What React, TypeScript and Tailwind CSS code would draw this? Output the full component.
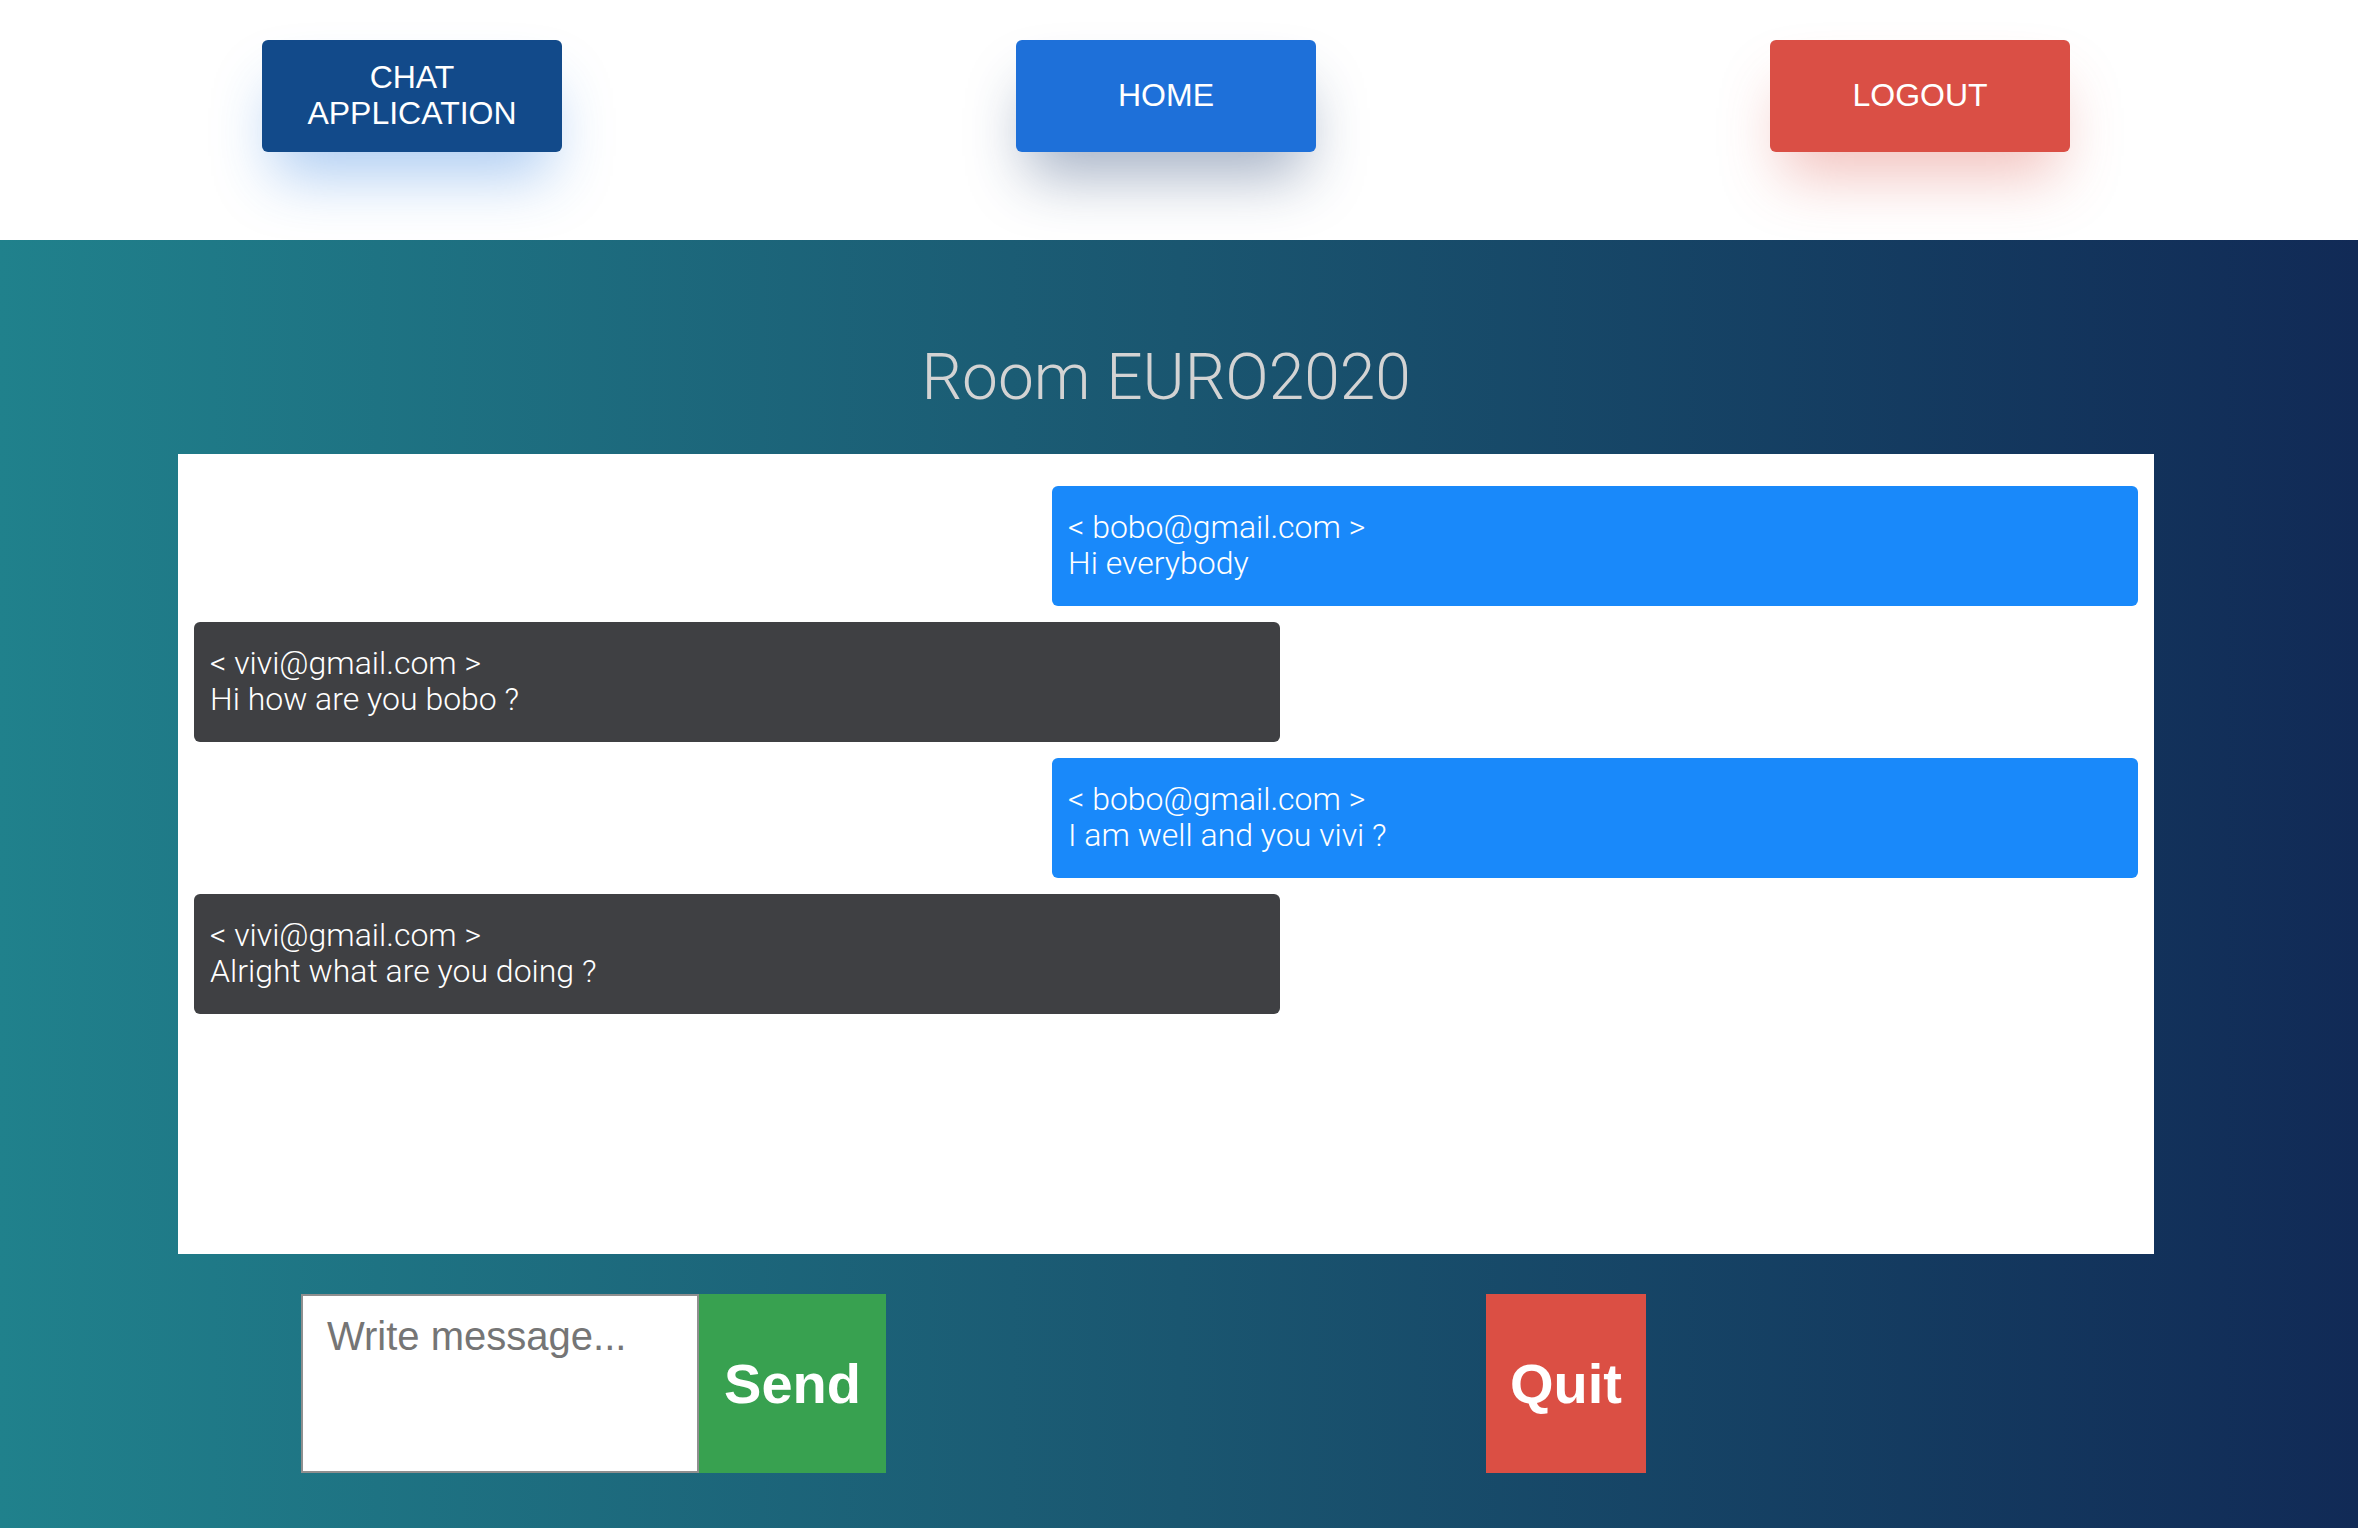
import React from "react";

type Msg = { from: string; text: string; mine: boolean };

const messages: Msg[] = [
  { from: "bobo@gmail.com", text: "Hi everybody", mine: true },
  { from: "vivi@gmail.com", text: "Hi how are you bobo ?", mine: false },
  { from: "bobo@gmail.com", text: "I am well and you vivi ?", mine: true },
  { from: "vivi@gmail.com", text: "Alright what are you doing ?", mine: false },
];

function NavButton({ label, className }: { label: string; className: string }) {
  return (
    <button
      className={
        "w-[300px] h-[112px] rounded-[6px] flex items-center justify-center px-6 pb-[2px] text-white text-[32px] leading-[36px] uppercase font-['Liberation_Sans',Arial,sans-serif] " +
        className
      }
    >
      {label}
    </button>
  );
}

export default function App() {
  return (
    <div className="min-h-screen flex flex-col bg-white">
      <header className="h-[240px] bg-white flex items-start justify-between pt-[40px] pl-[262px] pr-[288px]">
        <NavButton
          label="Chat Application"
          className="bg-[#124a8a] shadow-[0_36px_60px_-12px_rgba(40,120,220,0.38)]"
        />
        <NavButton
          label="Home"
          className="bg-[#1e70d9] shadow-[0_36px_60px_-12px_rgba(30,60,110,0.4)]"
        />
        <NavButton
          label="Logout"
          className="bg-[#da4f45] shadow-[0_36px_60px_-12px_rgba(218,79,69,0.35)]"
        />
      </header>

      <main className="flex-1 bg-linear-to-r from-[#20818c] via-[#1a5670] to-[#112a56]">
        <div className="w-[2332px] flex flex-col items-center pb-[55px]">
          <h1 className="pt-[100px] mb-[39px] text-[64px] leading-[75px] font-light text-[#d3d3d3] font-['Roboto',sans-serif]">
            Room EURO2020
          </h1>

          <div className="w-[1976px] h-[800px] bg-white pt-8 px-4 flex flex-col gap-4 font-['Roboto',sans-serif]">
            {messages.map((m, i) => (
              <div
                key={i}
                className={
                  "w-[1086px] rounded-[6px] pt-[23px] pb-[25px] px-4 text-white text-[32px] leading-[36px] font-light " +
                  (m.mine ? "self-end bg-[#1989fa]" : "self-start bg-[#3f4043]")
                }
              >
                <div>{"< " + m.from + " >"}</div>
                <div>{m.text}</div>
              </div>
            ))}
          </div>

          <div className="self-stretch mt-[40px] flex items-stretch pl-[301px] h-[179px]">
            <textarea
              placeholder="Write message..."
              className="w-[398px] h-full resize-none bg-white border-2 border-[#8f8f8f] pt-[10px] pl-6 text-[40px] text-black placeholder:text-[#757575] font-['Liberation_Sans',Arial,sans-serif] outline-none"
            />
            <button className="w-[187px] h-full bg-[#38a150] text-white text-[56px] font-bold font-['Liberation_Sans',Arial,sans-serif]">
              Send
            </button>
            <button className="ml-[600px] w-[160px] h-full bg-[#db4f44] text-white text-[56px] font-bold font-['Liberation_Sans',Arial,sans-serif]">
              Quit
            </button>
          </div>
        </div>
      </main>
    </div>
  );
}
